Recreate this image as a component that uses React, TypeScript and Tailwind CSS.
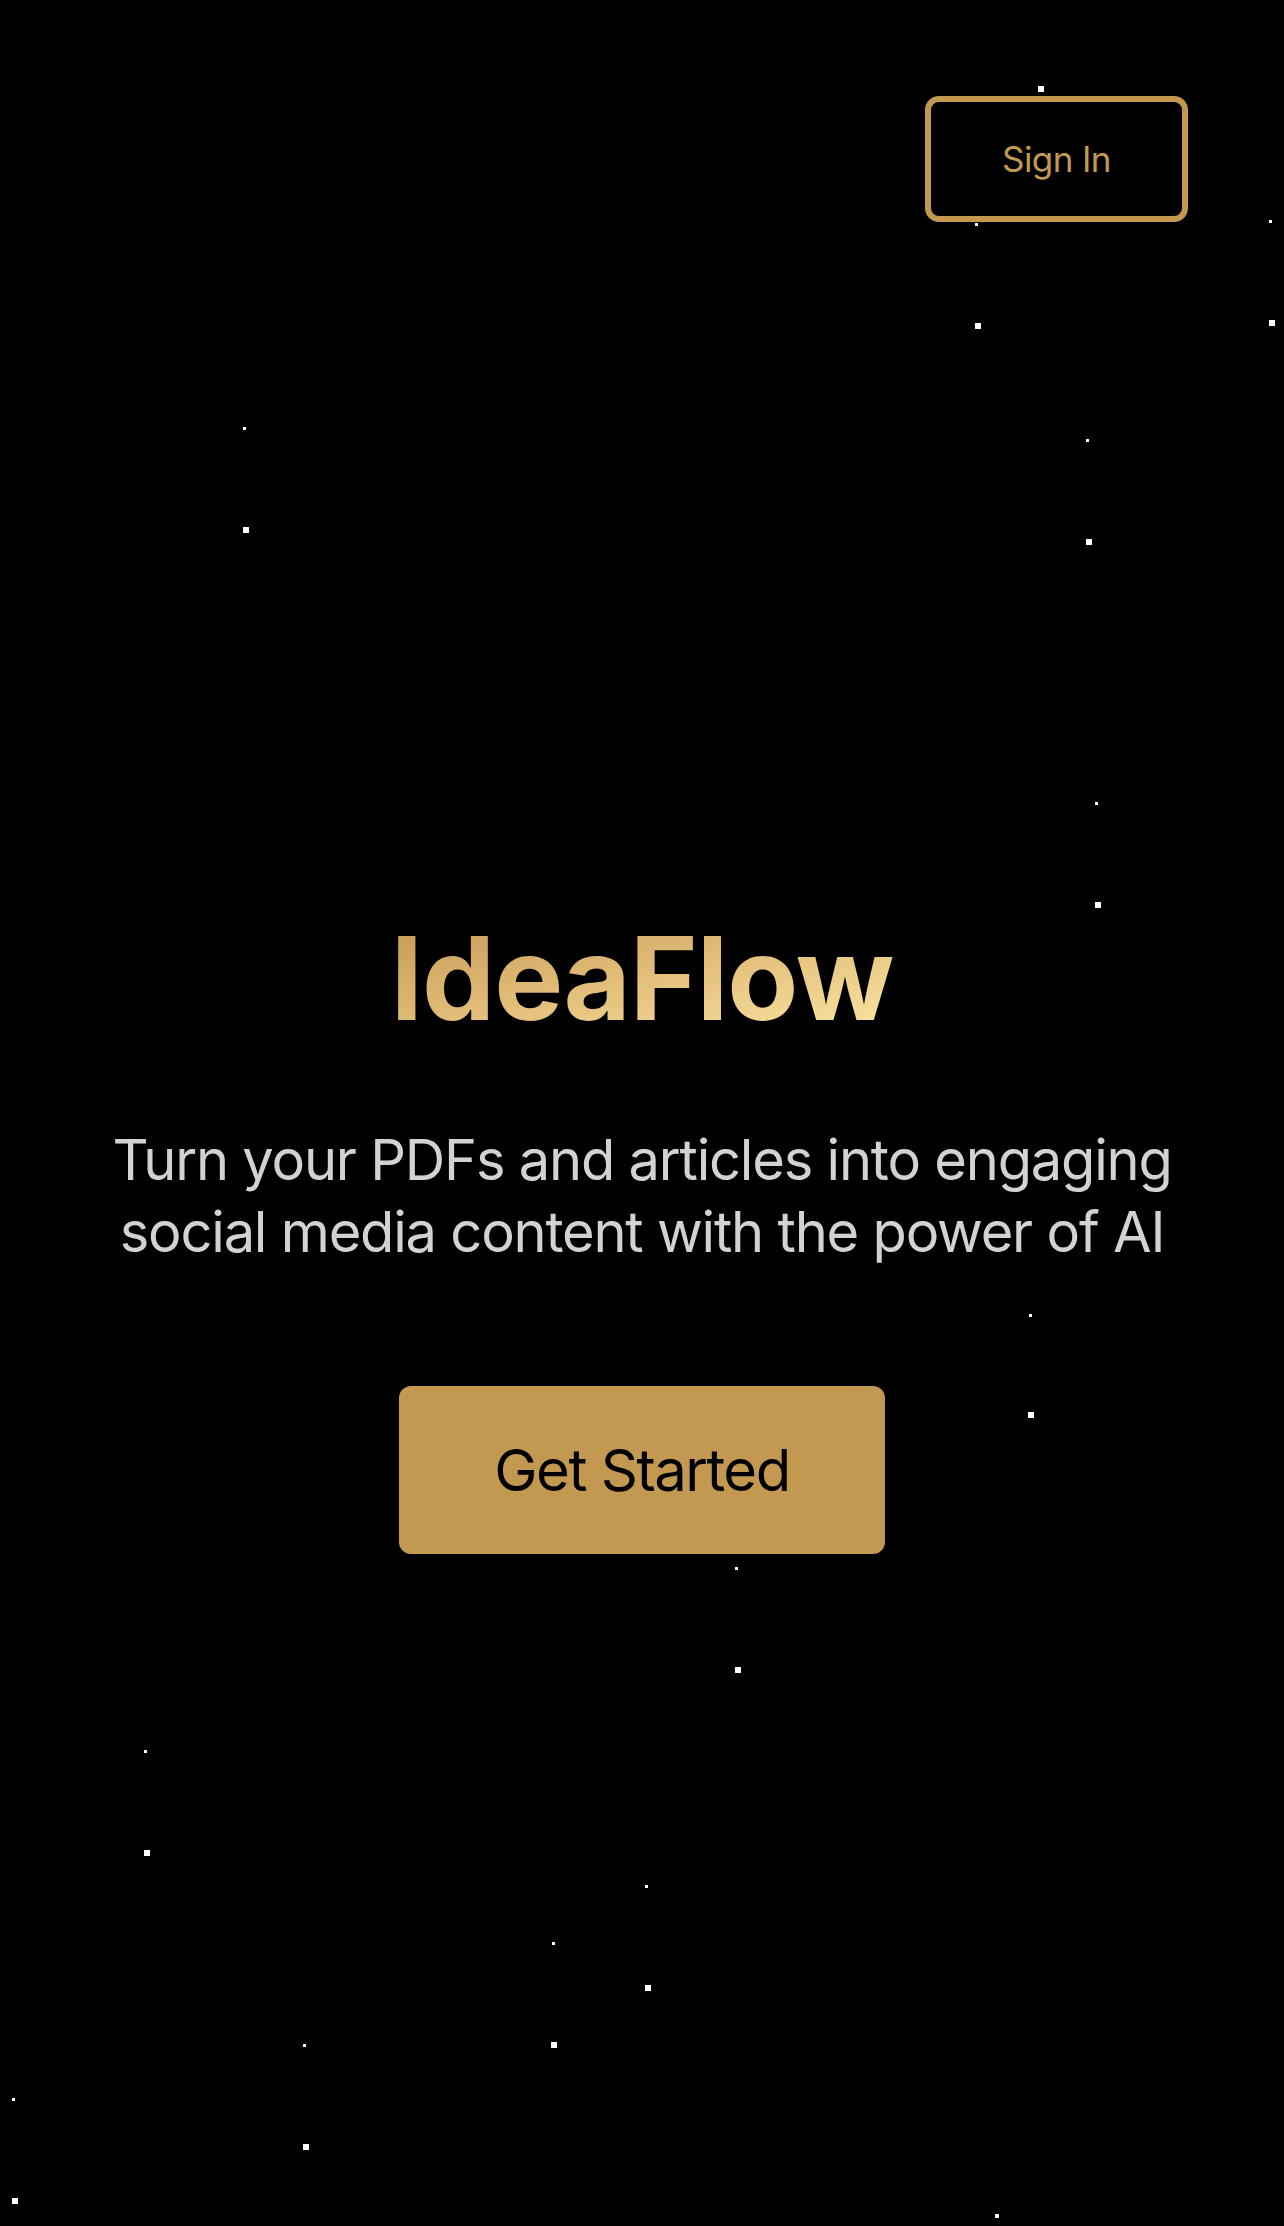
import React from 'react';

/* 별 좌표 — [x, y, size] (px, 좌상단 기준) */
const STARS: [number, number, number][] = [
    [1038, 86, 6],
    [975, 323, 6],
    [1269, 320, 6],
    [243, 527, 6],
    [1086, 539, 6],
    [1095, 902, 6],
    [1028, 1412, 6],
    [735, 1667, 6],
    [144, 1850, 6],
    [645, 1985, 6],
    [551, 2042, 6],
    [303, 2144, 6],
    [12, 2198, 6],
    [995, 2214, 4],
    [975, 223, 3],
    [1269, 220, 3],
    [243, 427, 3],
    [1086, 439, 3],
    [1095, 802, 3],
    [1029, 1314, 3],
    [735, 1567, 3],
    [144, 1750, 3],
    [645, 1885, 3],
    [552, 1942, 3],
    [303, 2044, 3],
    [12, 2098, 3],
];

function StarField() {
    return (
        <div className="pointer-events-none absolute inset-0">
            {STARS.map(([x, y, s], i) => (
                <span
                    key={i}
                    className="absolute block bg-white"
                    style={{ left: x, top: y, width: s, height: s }}
                />
            ))}
        </div>
    );
}

export default function App() {
    return (
        <div
            className="relative min-h-[2226px] w-full overflow-hidden bg-black"
            style={{ fontFamily: 'Inter, "Noto Sans", sans-serif' }}
        >
            <StarField />

            {/* 헤더 — 우측 상단 로그인 버튼 */}
            <header className="relative flex justify-end pr-[96px] pt-[96px]">
                <button className="flex h-[126px] w-[263px] items-center justify-center rounded-[14px] border-[6px] border-[#c39952] text-[35px] tracking-[-0.6px] text-[#c39952]">
                    Sign In
                </button>
            </header>

            {/* 히어로 */}
            <main className="relative mt-[698px] flex flex-col items-center px-[40px]">
                <h1 className="bg-gradient-to-br from-[#c49853] via-[#e3bf7a] to-[#fce6a4] bg-clip-text text-[116px] font-bold leading-none tracking-[-1px] text-transparent">
                    IdeaFlow
                </h1>
                <p className="mt-[88px] max-w-[1140px] text-center text-[56px] leading-[72px] tracking-[-1.2px] text-[#d2d2d2]">
                    Turn your PDFs and articles into engaging social media content with the power of AI
                </p>
                <button className="mt-[118px] flex h-[168px] w-[486px] items-center justify-center rounded-[12px] bg-[#c39952] text-[58px] tracking-[-1.5px] text-black">
                    Get Started
                </button>
            </main>
        </div>
    );
}
